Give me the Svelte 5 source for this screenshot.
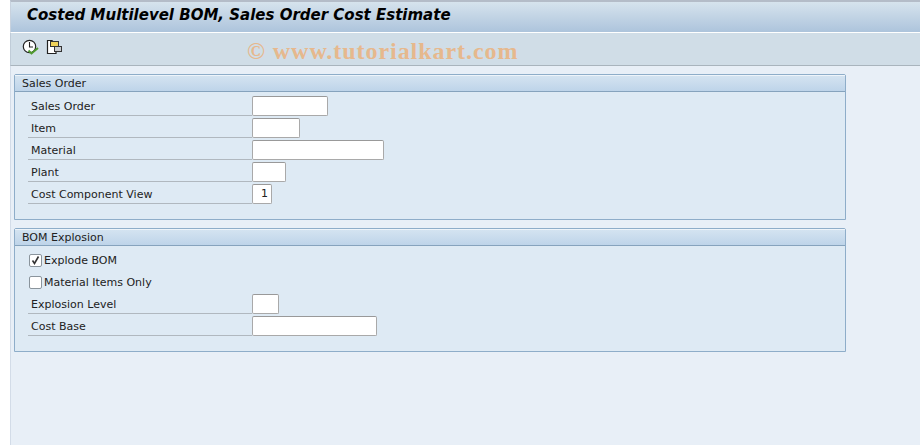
<script lang="ts">
  type Row = { label: string; width: number; value?: string; check?: boolean; checked?: boolean };

  const groups: { title: string; height: number; rows: Row[] }[] = [
    {
      title: 'Sales Order',
      height: 146,
      rows: [
        { label: 'Sales Order', width: 76 },
        { label: 'Item', width: 48 },
        { label: 'Material', width: 132 },
        { label: 'Plant', width: 34 },
        { label: 'Cost Component View', width: 20, value: '1' }
      ]
    },
    {
      title: 'BOM Explosion',
      height: 124,
      rows: [
        { label: 'Explode BOM', width: 0, check: true, checked: true },
        { label: 'Material Items Only', width: 0, check: true },
        { label: 'Explosion Level', width: 27 },
        { label: 'Cost Base', width: 125 }
      ]
    }
  ];
</script>

<div class="page">
  <header class="title">Costed Multilevel BOM, Sales Order Cost Estimate</header>

  <div class="toolbar">
    <!-- execute -->
    <svg class="ico" width="18" height="18" viewBox="0 0 18 18">
      <circle cx="8.5" cy="8.5" r="6.2" fill="#fff" stroke="#222" stroke-width="1.2" />
      <path d="M8.5 4V9H12" fill="none" stroke="#222" stroke-width="1.1" />
      <path d="M7.5 12.5L10.5 15.5L17 10" fill="none" stroke="#4f9a2e" stroke-width="2" />
    </svg>
    <!-- multiple selection -->
    <svg class="ico" width="18" height="18" viewBox="0 0 18 18">
      <path d="M1.5 2.5H6L10 6.5V15.5H1.5Z" fill="#fff" stroke="#222" stroke-width="1.2" />
      <rect x="4.5" y="3.5" width="8" height="5" fill="#f0d25a" stroke="#333" />
      <rect x="8.5" y="8.5" width="7" height="5" fill="#c9ccd0" stroke="#333" />
    </svg>
    <span class="mark">© www.tutorialkart.com</span>
  </div>

  <main class="content">
    {#each groups as g}
      <section class="group" style="height: {g.height}px">
        <div class="group-head">{g.title}</div>
        <div class="rows">
          {#each g.rows as r}
            {#if r.check}
              <div class="row check-row">
                <span class="box">
                  {#if r.checked}
                    <svg width="11" height="11" viewBox="0 0 11 11">
                      <path d="M2.5 5.5L4.5 8.5L8.5 1.5" fill="none" stroke="#333" stroke-width="1.6" />
                    </svg>
                  {/if}
                </span>
                <span>{r.label}</span>
              </div>
            {:else}
              <div class="row">
                <span class="label">{r.label}</span>
                <span class="field" style="width: {r.width}px">{r.value ?? ''}</span>
              </div>
            {/if}
          {/each}
        </div>
      </section>
    {/each}
  </main>
</div>

<style>
  :global(body) {
    margin: 0;
    background: #fff;
  }
  .page {
    width: 920px;
    height: 445px;
    box-sizing: border-box;
    padding-left: 10px;
    overflow: hidden;
    font-family: "DejaVu Sans", sans-serif;
    font-size: 11px;
    color: #222;
    display: flex;
    flex-direction: column;
  }
  .title {
    height: 30px;
    flex: none;
    border-top: 2px solid #b4bcc8;
    border-left: 1px solid #c8d2de;
    background: linear-gradient(180deg, #d6e3ed, #adc4dc);
    padding-left: 16px;
    font-size: 15px;
    line-height: 27px;
    font-weight: bold;
    font-style: italic;
    color: #000;
  }
  .toolbar {
    position: relative;
    height: 27px;
    flex: none;
    background: #d0dde7;
    border-top: 1px solid #fff;
    border-left: 1px solid #c0ccd8;
    border-bottom: 1px solid #a9b4bd;
    display: flex;
    align-items: flex-start;
    gap: 7px;
    padding: 5px 0 0 10px;
  }
  .ico {
    flex: none;
  }
  .mark {
    position: absolute;
    left: 236px;
    top: 5px;
    font-family: "Liberation Serif", serif;
    font-weight: bold;
    font-size: 24px;
    letter-spacing: 0.95px;
    color: #e6b88d;
    white-space: nowrap;
  }
  .content {
    flex: 1;
    background: #e8eff7;
    border-left: 1px solid #d3dce8;
    padding: 8px 0 0 3px;
    display: flex;
    flex-direction: column;
    gap: 8px;
  }
  .group {
    width: 832px;
    box-sizing: border-box;
    border: 1px solid #8eadc9;
    border-radius: 2px 2px 0 0;
    background: #deeaf4;
  }
  .group-head {
    height: 16px;
    border-bottom: 1px solid #86a3bd;
    background: linear-gradient(180deg, #d5e4f1, #bed4e9);
    box-shadow: inset 0 1px 0 #eef4fa;
    padding-left: 7px;
    line-height: 18px;
  }
  .rows {
    padding: 4px 0 0 13px;
    display: flex;
    flex-direction: column;
    gap: 2px;
  }
  .row {
    height: 20px;
    display: flex;
    align-items: stretch;
  }
  .label {
    width: 224px;
    box-sizing: border-box;
    padding-left: 3px;
    line-height: 22px;
    border-bottom: 1px solid #b0b8bf;
  }
  .field {
    box-sizing: border-box;
    background: #fff;
    border: 1px solid #a9a9a9;
    border-top-color: #999;
    border-radius: 2px;
    text-align: right;
    padding-right: 3px;
    line-height: 18px;
  }
  .check-row {
    align-items: center;
    gap: 2px;
    padding-left: 1px;
  }
  .box {
    width: 13px;
    height: 13px;
    box-sizing: border-box;
    border: 1px solid #8a949c;
    border-radius: 2px;
    background: #fff;
    display: flex;
    align-items: center;
    justify-content: center;
  }
</style>
